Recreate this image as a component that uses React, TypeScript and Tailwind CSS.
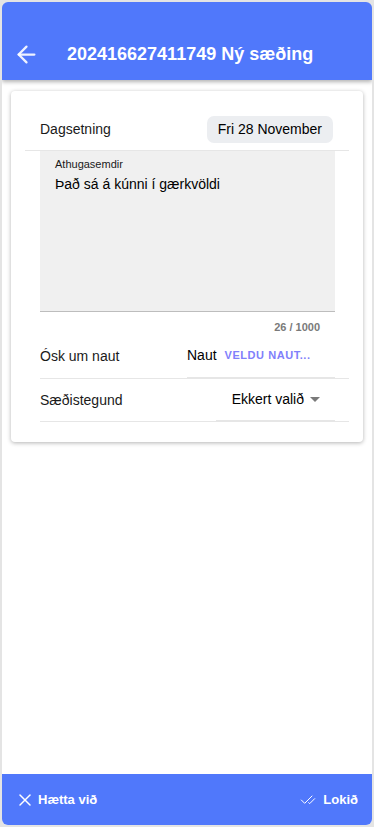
import { ArrowLeft, X, CheckCheck } from "lucide-react";

const font = { fontFamily: '"Liberation Sans", Arial, sans-serif' };

export default function App() {
  return (
    <div className="h-[827px] w-[374px] bg-[#e4e4e4] p-[2px]" style={font}>
      <div className="flex h-full flex-col overflow-hidden rounded-[6px] bg-white">
        {/* Header */}
        <header className="relative z-10 flex h-[78px] shrink-0 items-end bg-[#5078fb] pb-[12px] shadow-[0_2px_4px_rgba(0,0,0,0.3)]">
          <button className="ml-[11px] flex h-[27px] w-[27px] items-center justify-center text-white/90">
            <ArrowLeft size={27} strokeWidth={2} />
          </button>
          <h1 className="ml-[27px] pb-[2px] text-[18px] font-bold leading-[24px] text-white">
            202416627411749 Ný sæðing
          </h1>
        </header>

        {/* Content */}
        <main className="flex-1 px-[9px] pt-[11px]">
          <div className="rounded-[4px] bg-white pb-[20px] shadow-[0_1px_4px_rgba(0,0,0,0.3)]">
            <div className="ml-[14px] mr-[14px] flex h-[60px] items-end justify-between border-b border-[#e6e6e6] pb-[7px] pl-[15px] pr-[16px]">
              <span className="pb-[5px] text-[14px] leading-[17px] text-[#1a1a1a]">Dagsetning</span>
              <span className="rounded-[7px] bg-[#eceef1] px-[11px] py-[5px] text-[14px] leading-[17px] text-black">
                Fri 28 November
              </span>
            </div>

            <div className="ml-[29px] mr-[14px]">
              <div className="mr-[14px] h-[161px] border-b border-[#bdbdbd] bg-[#f0f0f0] px-[15px] pt-[7px]">
                <div className="text-[11px] leading-[13px] text-[#1a1a1a]">Athugasemdir</div>
                <div className="mt-[4px] text-[14px] leading-[18px] text-black">Það sá á kúnni í gærkvöldi</div>
              </div>
              <div className="mr-[14px] pr-[15px] pt-[8px] text-right text-[11px] font-bold leading-[14px] text-[#7a7a7a]">
                26 / 1000
              </div>

              <div className="flex h-[45px] items-center justify-between border-b border-[#e6e6e6]">
                <span className="text-[14px] text-[#1a1a1a]">Ósk um naut</span>
                <div className="mr-[14px] flex h-full w-[148px] items-center border-b border-[#e6e6e6]">
                  <span className="text-[14px] text-black">Naut</span>
                  <span className="ml-[8px] text-[11px] font-bold tracking-[0.05em] text-[#8080fb]">VELDU NAUT...</span>
                </div>
              </div>

              <div className="flex h-[43px] items-center justify-between border-b border-[#e6e6e6]">
                <span className="text-[14px] text-[#1a1a1a]">Sæðistegund</span>
                <div className="mr-[14px] flex h-full w-[119px] items-center justify-end border-b border-[#e6e6e6] pr-[15px]">
                  <span className="text-[14px] text-black">Ekkert valið</span>
                  <svg width="10" height="5" viewBox="0 0 10 5" className="ml-[6px]">
                    <path d="M0 0 L10 0 L5 5 Z" fill="#7a7a7a" />
                  </svg>
                </div>
              </div>
            </div>
          </div>
        </main>

        {/* Footer */}
        <footer className="flex h-[51px] shrink-0 items-center justify-between bg-[#5078fb] pl-[13px] pr-[14px] text-white">
          <button className="flex items-center gap-[3px] text-[13px] font-bold">
            <X size={20} strokeWidth={1.8} />
            Hætta við
          </button>
          <button className="flex items-center gap-[7px] text-[13px] font-bold">
            <CheckCheck size={16} strokeWidth={1.5} />
            Lokið
          </button>
        </footer>
      </div>
    </div>
  );
}
